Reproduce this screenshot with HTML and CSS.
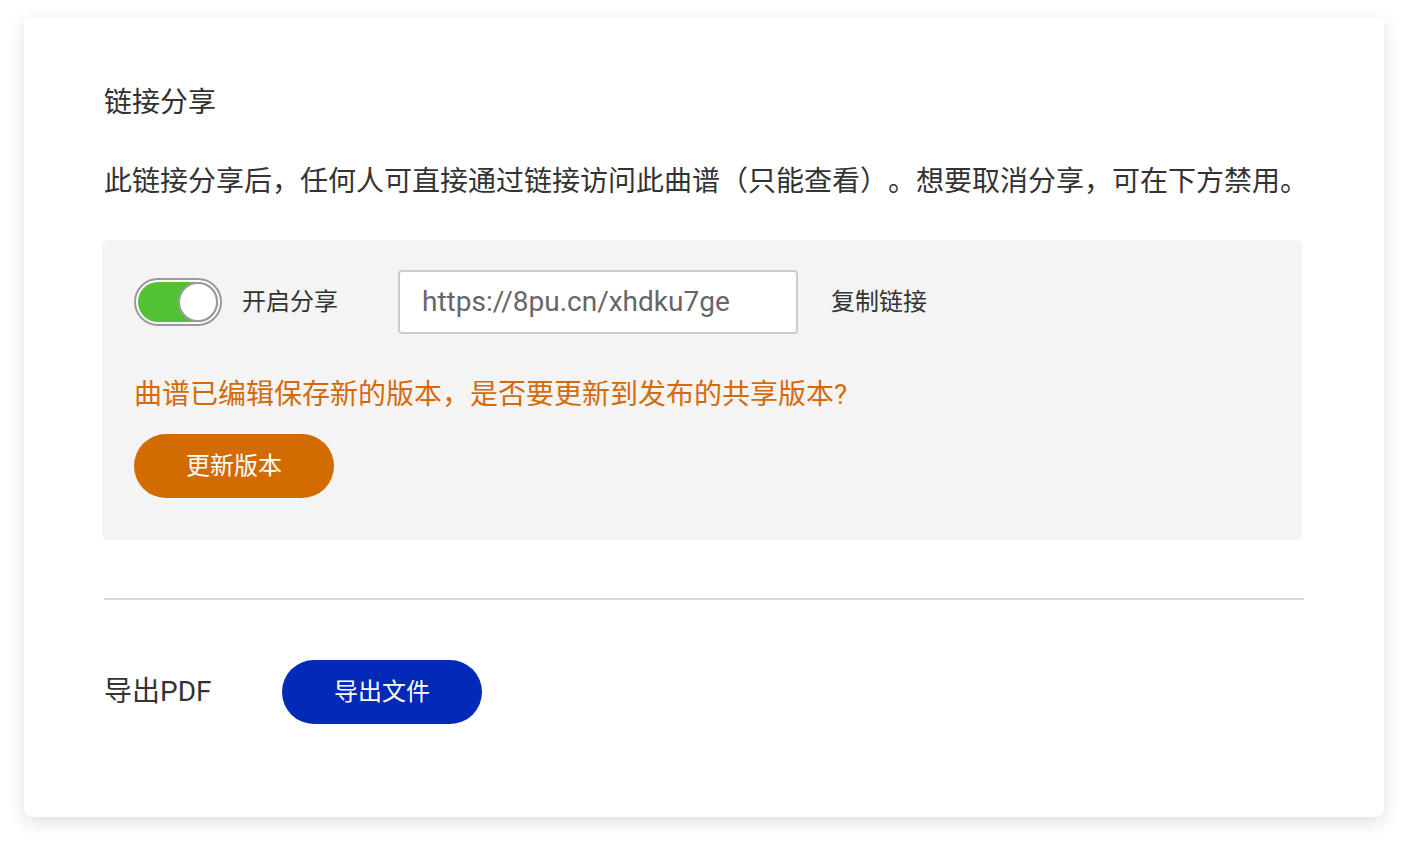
FILE: index.html
```html
<!DOCTYPE html>
<html lang="zh-CN">
<head>
<meta charset="utf-8">
<title>链接分享</title>
<link rel="stylesheet" href="styles.css">
</head>
<body>
<div class="card">
  <h2 class="title">链接分享</h2>
  <p class="desc">此链接分享后，任何人可直接通过链接访问此曲谱（只能查看）。想要取消分享，可在下方禁用。</p>
  <div class="share-box">
    <div class="share-row">
      <div class="switch"><div class="track"><div class="knob"></div></div></div>
      <span class="switch-label">开启分享</span>
      <div class="url-input">https://8pu.cn/xhdku7ge</div>
      <span class="copy-link">复制链接</span>
    </div>
    <p class="notice">曲谱已编辑保存新的版本，是否要更新到发布的共享版本?</p>
    <button class="btn btn-orange">更新版本</button>
  </div>
  <div class="divider"></div>
  <div class="export-row">
    <span class="export-label">导出PDF</span>
    <button class="btn btn-blue">导出文件</button>
  </div>
</div>
</body>
</html>
```

FILE: styles.css
```css
* { box-sizing: border-box; }
html, body { margin: 0; padding: 0; background: #ffffff; }
body {
  font-family: Roboto, "Noto Sans CJK SC", sans-serif;
  color: #333333;
  padding: 18px 24px 31px 24px;
  text-spacing-trim: space-all;
}
.card {
  width: 1360px;
  height: 799px;
  background: #ffffff;
  border-radius: 8px;
  box-shadow: 0 5px 18px rgba(0, 0, 0, 0.13);
  padding: 65px 80px 0 80px;
}
.title {
  margin: 0;
  font-size: 28px;
  font-weight: 400;
  line-height: 40px;
  color: #303030;
}
.desc {
  margin: 39px 0 0 0;
  font-size: 28px;
  line-height: 40px;
  white-space: nowrap;
}
.share-box {
  margin: 38px 0 0 -2px;
  width: 1200px;
  background: #f4f4f4;
  border-radius: 6px;
  padding: 30px 32px 42px 32px;
}
.share-row {
  display: flex;
  align-items: center;
  height: 64px;
}
.switch {
  width: 88px;
  height: 48px;
  border: 2px solid #9a9a9a;
  border-radius: 24px;
  padding: 2px;
  background: #ffffff;
}
.track {
  width: 80px;
  height: 40px;
  border-radius: 20px;
  background: #52c234;
  display: flex;
  justify-content: flex-end;
}
.knob {
  width: 40px;
  height: 40px;
  border-radius: 50%;
  background: #ffffff;
  border: 2px solid #9a9a9a;
}
.switch-label {
  margin-left: 20px;
  font-size: 24px;
  line-height: 32px;
}
.url-input {
  margin-left: 60px;
  width: 400px;
  height: 64px;
  border: 2px solid #cccccc;
  border-radius: 4px;
  background: #ffffff;
  padding: 0 22px;
  font-size: 28px;
  line-height: 60px;
  color: #666666;
}
.copy-link {
  margin-left: 33px;
  font-size: 24px;
  line-height: 32px;
}
.notice {
  margin: 41px 0 0 0;
  font-size: 28px;
  line-height: 40px;
  color: #d46b08;
}
.btn {
  display: block;
  width: 200px;
  height: 64px;
  border: none;
  border-radius: 32px;
  color: #ffffff;
  font-family: Roboto, "Noto Sans CJK SC", sans-serif;
  font-size: 24px;
  line-height: 32px;
  padding: 0 0 1px 0;
}
.btn-orange {
  margin-top: 19px;
  background: #d26b02;
}
.btn-blue {
  background: #0229b8;
}
.divider {
  margin-top: 58px;
  width: 1200px;
  height: 2px;
  background: #d8d8d8;
}
.export-row {
  margin-top: 60px;
  display: flex;
  align-items: center;
}
.export-label {
  width: 178px;
  font-size: 28px;
  line-height: 40px;
}
```
